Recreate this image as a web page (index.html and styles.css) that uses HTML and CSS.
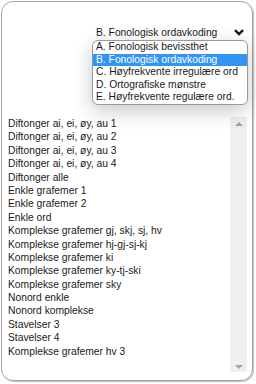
FILE: index.html
```html
<!DOCTYPE html>
<html>
<head>
<meta charset="utf-8">
<link rel="stylesheet" href="styles.css">
</head>
<body>
<div class="card">
  <div class="head">
    <div class="select">
      <span class="select-value">B. Fonologisk ordavkoding</span>
      <svg class="chevron" width="10" height="7" viewBox="0 0 10 7"><path d="M1 1.2 L5 5 L9 1.2" fill="none" stroke="#111" stroke-width="2.4"/></svg>
    </div>
    <ul class="dropdown">
      <li class="opt">A. Fonologisk bevissthet</li>
      <li class="opt active">B. Fonologisk ordavkoding</li>
      <li class="opt">C. Høyfrekvente irregulære ord</li>
      <li class="opt">D. Ortografiske mønstre</li>
      <li class="opt">E. Høyfrekvente regulære ord.</li>
    </ul>
  </div>
  <div class="list">
    <ul class="items">
      <li>Diftonger ai, ei, øy, au 1</li>
      <li>Diftonger ai, ei, øy, au 2</li>
      <li>Diftonger ai, ei, øy, au 3</li>
      <li>Diftonger ai, ei, øy, au 4</li>
      <li>Diftonger alle</li>
      <li>Enkle grafemer 1</li>
      <li>Enkle grafemer 2</li>
      <li>Enkle ord</li>
      <li>Komplekse grafemer gj, skj, sj, hv</li>
      <li>Komplekse grafemer hj-gj-sj-kj</li>
      <li>Komplekse grafemer ki</li>
      <li>Komplekse grafemer ky-tj-ski</li>
      <li>Komplekse grafemer sky</li>
      <li>Nonord enkle</li>
      <li>Nonord komplekse</li>
      <li>Stavelser 3</li>
      <li>Stavelser 4</li>
      <li>Komplekse grafemer hv 3</li>
    </ul>
    <div class="scrollbar">
      <span class="arrow up"></span>
      <span class="arrow down"></span>
    </div>
  </div>
</div>
</body>
</html>
```

FILE: styles.css
```css
html, body {
  margin: 0;
  padding: 0;
  background: #fff;
}
body {
  width: 256px;
  height: 384px;
  font-family: "Liberation Sans", Arial, sans-serif;
  font-size: 10.3px;
  color: #1a1a1a;
}
.card {
  margin: 1px 0 0 1px;
  width: 252px;
  height: 380px;
  box-sizing: border-box;
  border: 1px solid #a3a3a3;
  border-radius: 12px;
  box-shadow: 1px 1px 1px rgba(0,0,0,0.25);
  display: flex;
  flex-direction: column;
  position: relative;
}
.head {
  height: 114px;
  position: relative;
}
.select {
  display: flex;
  align-items: center;
  justify-content: space-between;
  padding: 24px 8px 0 94px;
  height: 13px;
  line-height: 13px;
}
.chevron {
  display: block;
}
.dropdown {
  position: absolute;
  left: 90px;
  top: 38px;
  width: 156px;
  box-sizing: border-box;
  margin: 0;
  padding: 0;
  list-style: none;
  background: #fff;
  border: 1px solid #999;
  border-radius: 6px;
  box-shadow: 0 6px 20px rgba(0,0,0,0.22);
  overflow: hidden;
  z-index: 2;
}
.opt {
  height: 12.6px;
  line-height: 12.6px;
  padding-left: 3px;
  white-space: nowrap;
}
.opt.active {
  background: #3294f5;
  color: #fff;
}
.list {
  flex: 1;
  display: flex;
  padding: 1px 5px 8px 0;
}
.items {
  flex: 1;
  margin: 0;
  padding: 0 0 0 6px;
  list-style: none;
}
.items li {
  height: 13.4px;
  line-height: 13.4px;
  white-space: nowrap;
}
.scrollbar {
  width: 17px;
  background: #efefef;
  display: flex;
  flex-direction: column;
  justify-content: space-between;
  align-items: center;
  padding: 5px 0 3px;
}
.arrow {
  width: 0;
  height: 0;
  border-left: 4px solid transparent;
  border-right: 4px solid transparent;
}
.arrow.up {
  border-bottom: 4px solid #a3a3a3;
}
.arrow.down {
  border-top: 4px solid #a3a3a3;
}
```
